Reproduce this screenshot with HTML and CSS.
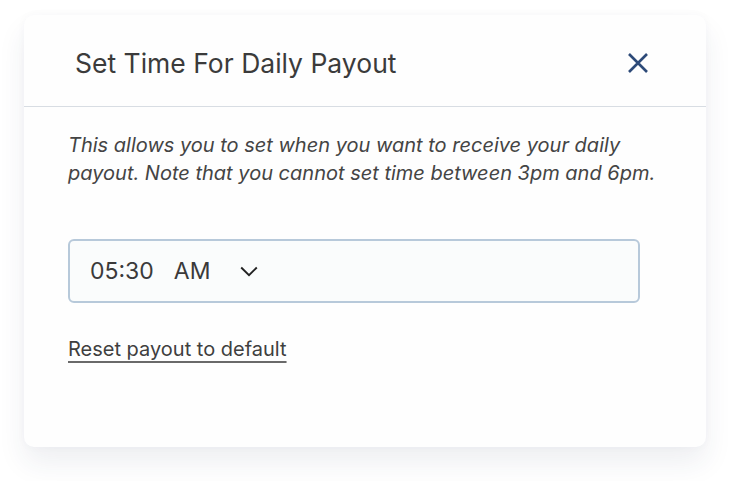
FILE: index.html
```html
<!DOCTYPE html>
<html>

<head>
  <title>Set Time For Daily Payout</title>
  <link rel="stylesheet" href="styles.css">
</head>

<body>
  <div class="modal">
    <div class="modal-header">
      <h2 class="modal-title">Set Time For Daily Payout</h2>
      <button class="close-btn" aria-label="Close">
        <svg width="22" height="22" viewBox="0 0 22 22">
          <path d="M2 2 L20 20 M20 2 L2 20" stroke="#2d4a78" stroke-width="2.6" stroke-linecap="butt" fill="none" />
        </svg>
      </button>
    </div>

    <div class="modal-body">
      <p class="hint">
        This allows you to set when you want to receive your daily
        payout. Note that you cannot set time between 3pm and 6pm.
      </p>

      <div class="time-field">
        <span class="time-value">05:30</span>
        <span class="time-period">AM</span>
        <svg class="chevron" width="18" height="11" viewBox="0 0 18 11">
          <path d="M1.2 1.5 L9 9.2 L16.8 1.5" stroke="#222" stroke-width="1.9" fill="none" />
        </svg>
      </div>

      <a href="#" class="reset-link">Reset payout to default</a>
    </div>
  </div>
</body>

</html>
```

FILE: styles.css
```css
body {
  margin: 0;
  padding: 15px 24px 34px;
  background-color: #ffffff;
  font-family: "Inter", "Noto Sans", Arial, sans-serif;
  color: #3d3d3d;
}

.modal {
  background-color: #fefefe;
  border-radius: 10px;
  height: 432px;
  box-shadow: 0 16px 28px rgba(40, 50, 90, 0.08), 0 0 10px rgba(40, 50, 90, 0.03);
}

/* --- Header --- */
.modal-header {
  display: flex;
  align-items: center;
  justify-content: space-between;
  height: 92px;
  padding: 4px 57px 0 51px;
  box-sizing: border-box;
  border-bottom: 1px solid #d8dde3;
}

.modal-title {
  margin: 0;
  font-size: 26.5px;
  font-weight: 400;
  color: #3b3b3b;
}

.close-btn {
  background: none;
  border: none;
  padding: 0;
  cursor: pointer;
  display: flex;
}

/* --- Body --- */
.modal-body {
  padding: 24px 44px;
}

.hint {
  margin: 0 0 52px;
  font-size: 20px;
  line-height: 28px;
  font-style: italic;
  color: #444444;
}

.time-field {
  display: flex;
  align-items: center;
  width: 572px;
  height: 64px;
  box-sizing: border-box;
  padding: 0 20px;
  background-color: #fafcfc;
  border: 2px solid #b7c9da;
  border-radius: 6px;
  font-size: 23px;
  color: #3a3a3a;
  margin-bottom: 34px;
}

.time-period {
  margin-left: 20px;
}

.chevron {
  margin-left: 29px;
}

.reset-link {
  font-size: 20px;
  color: #3f3f3f;
  text-decoration: underline;
  text-decoration-thickness: 2px;
  text-underline-offset: 5px;
  text-decoration-color: #6a6a6a;
}
```
